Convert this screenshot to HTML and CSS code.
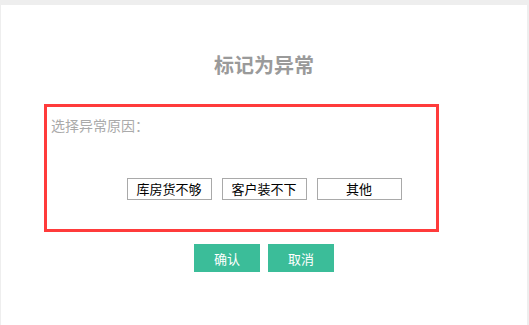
FILE: index.html
```html
<!DOCTYPE html>
<html lang="zh-CN">
<head>
<meta charset="utf-8">
<title>标记为异常</title>
<link rel="stylesheet" href="styles.css">
</head>
<body>
<div class="panel">
  <h2 class="title">标记为异常</h2>
  <div class="reason">
    <p class="label">选择异常原因：</p>
    <div class="options">
      <button class="opt">库房货不够</button>
      <button class="opt">客户装不下</button>
      <button class="opt">其他</button>
    </div>
  </div>
  <div class="actions">
    <button class="btn">确认</button>
    <button class="btn">取消</button>
  </div>
  <div class="highlight"></div>
</div>
</body>
</html>
```

FILE: styles.css
```css
html, body {
  margin: 0;
  padding: 0;
  background: #eeeeee;
  height: 325px;
  overflow: hidden;
}
body {
  font-family: "Noto Sans CJK SC", "Noto Sans", sans-serif;
}
.panel {
  position: relative;
  margin: 5px 0 0 1px;
  width: 526px;
  height: 320px;
  background: #ffffff;
  box-sizing: border-box;
  padding-top: 48px;
}
.title {
  margin: 0;
  text-align: center;
  font-size: 20px;
  line-height: 24px;
  font-weight: bold;
  color: #9a9a9a;
}
.reason {
  padding-top: 38px;
}
.label {
  margin: 0 0 0 50px;
  font-size: 14px;
  line-height: 20px;
  color: #aaaaaa;
}
.options {
  margin-top: 43px;
  display: flex;
  justify-content: center;
  gap: 10px;
}
.opt {
  width: 85px;
  height: 22px;
  box-sizing: border-box;
  border: 1px solid #a9a9a9;
  background: #ffffff;
  color: #000000;
  font-family: inherit;
  font-size: 13px;
  line-height: 18px;
  padding: 0;
  margin: 0;
}
.actions {
  margin-top: 44px;
  display: flex;
  justify-content: center;
  gap: 8px;
}
.btn {
  width: 66px;
  height: 28px;
  border: none;
  background: #3bbd99;
  color: #ffffff;
  font-family: inherit;
  font-size: 13px;
  padding: 0;
  margin: 0;
}
.highlight {
  position: absolute;
  left: 43px;
  top: 99px;
  width: 395px;
  height: 128px;
  box-sizing: border-box;
  border: 3px solid #ff3b3b;
  pointer-events: none;
}
```
